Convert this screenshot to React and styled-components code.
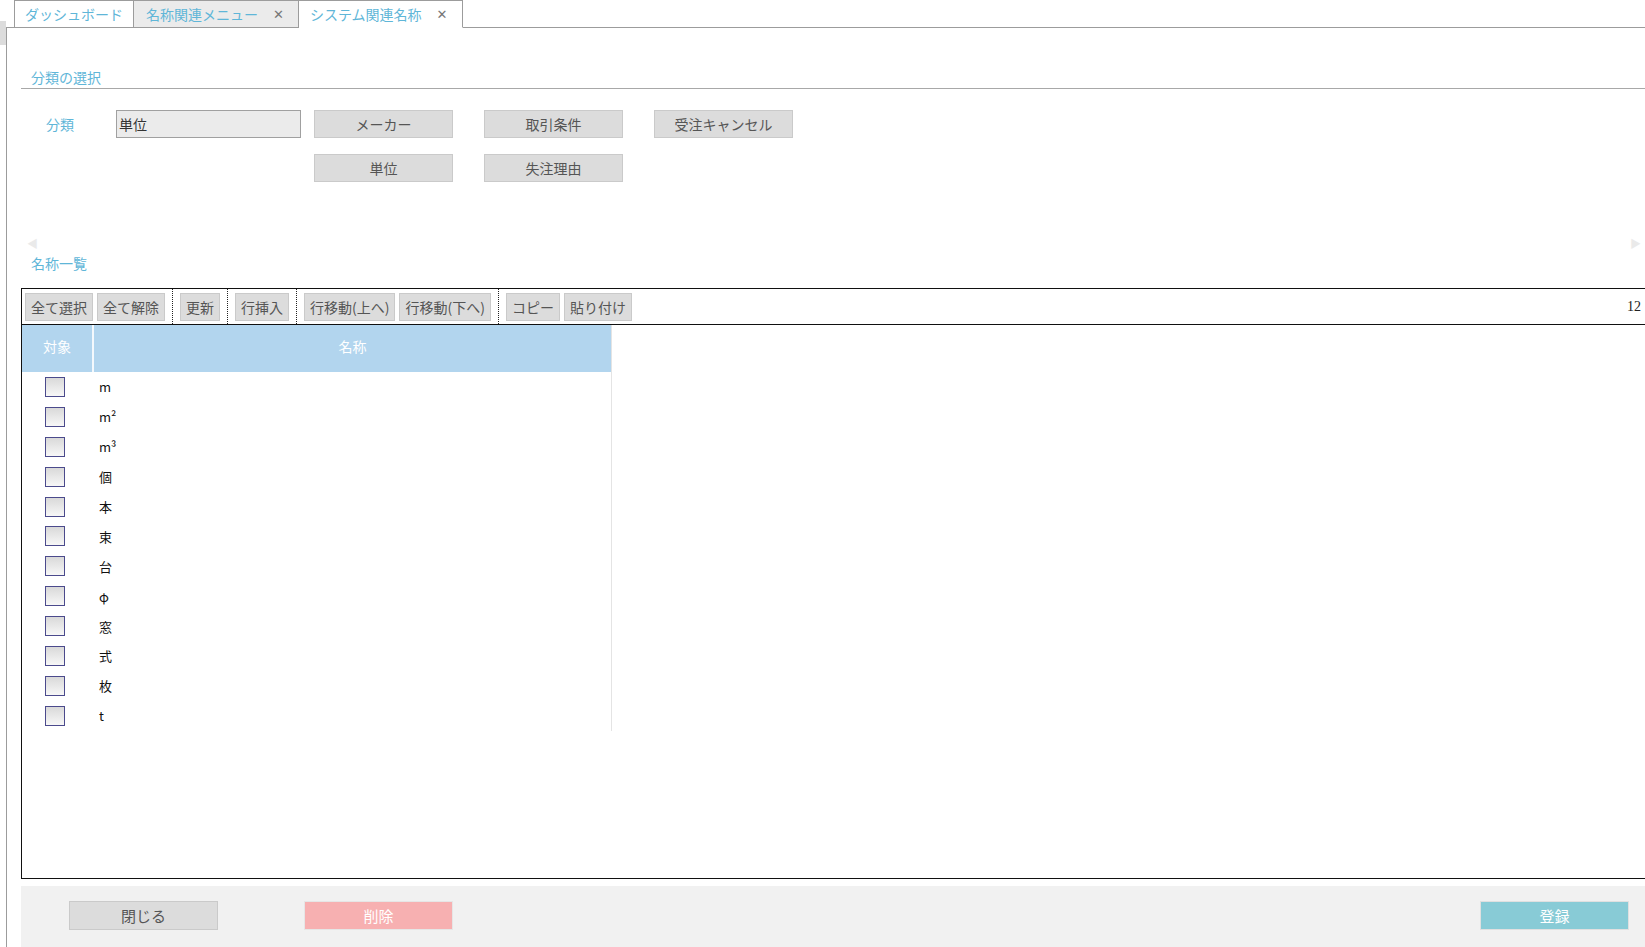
import React from 'react';
import styled, { createGlobalStyle } from 'styled-components';

const Global = createGlobalStyle`
  html, body { margin: 0; padding: 0; background: #fff; overflow: hidden; }
  body { font-family: "Noto Sans CJK JP", "Noto Sans", sans-serif; font-size: 14px; color: #333; }
  * { box-sizing: border-box; }
`;

const Page = styled.div`
  display: flex;
  width: 1645px;
  height: 947px;
  overflow: hidden;
`;

const Side = styled.div`
  width: 6px;
  flex: none;
`;

const SideGrip = styled.div`
  margin-top: 21px;
  height: 24px;
  background: #dcdcdc;
`;

const Main = styled.div`
  flex: 1;
  display: flex;
  flex-direction: column;
  min-width: 0;
`;

const TabBar = styled.div`
  display: flex;
  height: 28px;
  padding-left: 8px;
  border-bottom: 1px solid #9c9c9c;
  flex: none;
`;

const Tab = styled.div`
  display: flex;
  align-items: center;
  gap: ${p => p.$gap || 0}px;
  padding: 0 ${p => p.$pr || 10}px 0 ${p => p.$pl || 10}px;
  border: 1px solid #9c9c9c;
  border-bottom: ${p => (p.$active ? '1px solid #fff' : 'none')};
  margin-bottom: ${p => (p.$active ? '-1px' : '0')};
  height: ${p => (p.$active ? '28px' : '27px')};
  background: ${p => (p.$muted ? '#ebebeb' : '#fff')};
  color: #5fb6d8;
  font-size: 14px;
  & + & { border-left: ${p => (p.$active ? 'none' : '1px solid #9c9c9c')}; }
`;

const Close = styled.span`
  color: #777;
  font-size: 13px;
  font-family: "DejaVu Sans", sans-serif;
`;

const Content = styled.div`
  flex: 1;
  border-left: 1px solid #9c9c9c;
  padding-left: 14px;
  display: flex;
  flex-direction: column;
`;

const SectionTitle = styled.div`
  color: #5fb6d8;
  font-size: 14px;
  line-height: 22px;
  padding-left: 10px;
  padding-top: ${p => p.$top || 0}px;
  border-bottom: ${p => (p.$line ? '1px solid #a8a8a8' : 'none')};
`;

const Form = styled.div`
  margin-top: 21px;
  display: flex;
  flex-direction: column;
  gap: 16px;
`;

const FormRow = styled.div`
  display: flex;
  height: 28px;
  padding-left: ${p => p.$indent || 0}px;
`;

const Label = styled.div`
  color: #5fb6d8;
  width: 95px;
  display: flex;
  align-items: center;
  padding-left: 25px;
`;

const Field = styled.div`
  width: 185px;
  border: 1px solid #a0a0a0;
  background: #ebebeb;
  display: flex;
  align-items: center;
  padding-left: 2px;
  color: #333;
  margin-right: 13px;
`;

const Picks = styled.div`
  display: flex;
  gap: 31px;
`;

const PickButton = styled.div`
  background: #dcdcdc;
  border: 1px solid #cacaca;
  color: #555;
  display: flex;
  align-items: center;
  justify-content: center;
  width: 139px;
`;

const Spacer = styled.div`
  height: 70px;
  display: flex;
  justify-content: space-between;
  align-items: flex-end;
  padding: 0 4px 1px 6px;
  color: #eaeaea;
  font-size: 11px;
`;

const GridBox = styled.div`
  margin-top: 14px;
  height: 591px;
  border: 1.5px solid #111;
  border-right: none;
  display: flex;
  flex-direction: column;
`;

const Toolbar = styled.div`
  height: 36px;
  flex: none;
  display: flex;
  align-items: stretch;
  padding-left: 3px;
  border-bottom: 1.5px solid #111;
`;

const ToolGroup = styled.div`
  display: flex;
  align-items: center;
  gap: 4px;
`;

const ToolButton = styled.div`
  height: 28px;
  padding: 0 5px;
  background: #dcdcdc;
  border: 1px solid #cacaca;
  color: #555;
  display: flex;
  align-items: center;
  font-size: 14px;
  white-space: nowrap;
`;

const Sep = styled.div`
  width: 0;
  border-left: 1.5px dotted #222;
  margin: 0 7px;
`;

const Count = styled.div`
  margin-left: auto;
  display: flex;
  align-items: center;
  padding-right: 4px;
  font-family: "Liberation Serif", serif;
  font-size: 14px;
  color: #222;
`;

const Table = styled.div`
  width: 590px;
  border-right: 1px solid #e4e4e4;
  align-self: flex-start;
`;

const HeadRow = styled.div`
  display: grid;
  grid-template-columns: 70px 1fr;
  height: 47px;
  background: #b2d5ee;
  color: #fff;
`;

const HeadCell = styled.div`
  display: flex;
  align-items: center;
  justify-content: center;
  padding-bottom: 5px;
  border-left: ${p => (p.$first ? 'none' : '2px solid #f4f9fd')};
`;

const Row = styled.div`
  display: grid;
  grid-template-columns: 70px 1fr;
  height: 29.9px;
  align-items: center;
`;

const Check = styled.div`
  width: 20px;
  height: 20px;
  margin-left: 23px;
  border: 1.5px solid #4b4a8c;
  background: linear-gradient(#d9d9d9, #f7f7f7);
`;

const Name = styled.div`
  padding-left: 7px;
  color: #111;
  font-size: 13px;
`;

const Footer = styled.div`
  margin-top: 7px;
  height: 70px;
  background: #f1f1f1;
  display: flex;
  padding: 15px 16px 0 48px;
`;

const FootButton = styled.div`
  width: 149px;
  height: 29px;
  display: flex;
  align-items: center;
  justify-content: center;
  font-size: 15px;
  border: 1px solid ${p => p.$border};
  background: ${p => p.$bg};
  color: ${p => p.$fg};
  margin-left: ${p => p.$ml || 0};
`;

const units = ['m', 'm²', 'm³', '個', '本', '束', '台', 'φ', '窓', '式', '枚', 't'];

export default function App() {
  return (
    <Page>
      <Global />
      <Side><SideGrip /></Side>
      <Main>
        <TabBar>
          <Tab $pl={10} $pr={10}>ダッシュボード</Tab>
          <Tab $muted $pl={12} $pr={14} $gap={15}>名称関連メニュー<Close>✕</Close></Tab>
          <Tab $active $pl={11} $pr={15} $gap={15}>システム関連名称<Close>✕</Close></Tab>
        </TabBar>
        <Content>
          <SectionTitle $top={38} $line>分類の選択</SectionTitle>
          <Form>
            <FormRow>
              <Label>分類</Label>
              <Field>単位</Field>
              <Picks>
                <PickButton>メーカー</PickButton>
                <PickButton>取引条件</PickButton>
                <PickButton>受注キャンセル</PickButton>
              </Picks>
            </FormRow>
            <FormRow $indent={293}>
              <Picks>
                <PickButton>単位</PickButton>
                <PickButton>失注理由</PickButton>
              </Picks>
            </FormRow>
          </Form>
          <Spacer><span>◀</span><span>▶</span></Spacer>
          <SectionTitle>名称一覧</SectionTitle>
          <GridBox>
            <Toolbar>
              <ToolGroup>
                <ToolButton>全て選択</ToolButton>
                <ToolButton>全て解除</ToolButton>
              </ToolGroup>
              <Sep />
              <ToolGroup><ToolButton>更新</ToolButton></ToolGroup>
              <Sep />
              <ToolGroup><ToolButton>行挿入</ToolButton></ToolGroup>
              <Sep />
              <ToolGroup>
                <ToolButton>行移動(上へ)</ToolButton>
                <ToolButton>行移動(下へ)</ToolButton>
              </ToolGroup>
              <Sep />
              <ToolGroup>
                <ToolButton>コピー</ToolButton>
                <ToolButton>貼り付け</ToolButton>
              </ToolGroup>
              <Count>12</Count>
            </Toolbar>
            <Table>
              <HeadRow>
                <HeadCell $first>対象</HeadCell>
                <HeadCell>名称</HeadCell>
              </HeadRow>
              {units.map(u => (
                <Row key={u}>
                  <Check />
                  <Name>{u}</Name>
                </Row>
              ))}
            </Table>
          </GridBox>
          <Footer>
            <FootButton $bg="#dcdcdc" $border="#cacaca" $fg="#555">閉じる</FootButton>
            <FootButton $bg="#f7b0b1" $border="#e6e6e6" $fg="#fff" $ml="86px">削除</FootButton>
            <FootButton $bg="#88cbd6" $border="#e0e0e0" $fg="#fff" $ml="auto">登録</FootButton>
          </Footer>
        </Content>
      </Main>
    </Page>
  );
}
